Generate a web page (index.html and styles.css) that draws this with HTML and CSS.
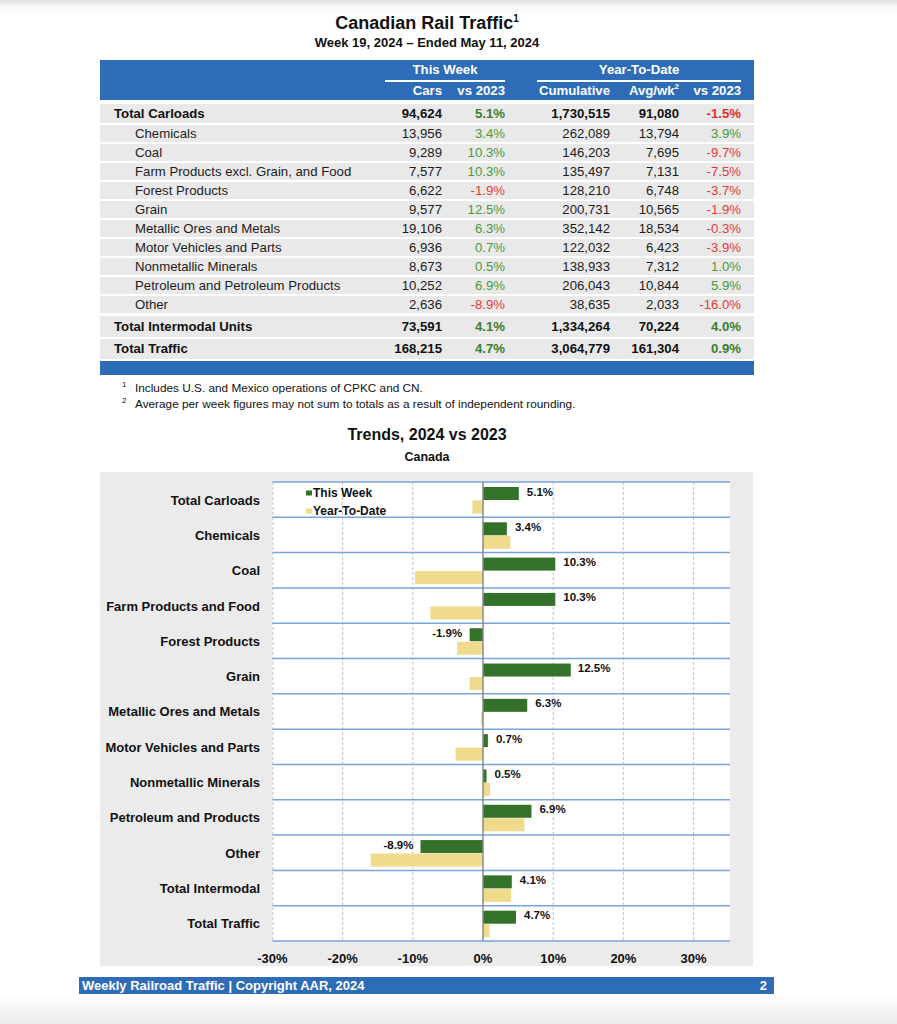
FILE: index.html
```html
<!DOCTYPE html>
<html>
<head>
<meta charset="utf-8">
<title>Canadian Rail Traffic</title>
<link rel="stylesheet" href="styles.css">
</head>
<body>
<div class="page">
  <h1 class="title">Canadian Rail Traffic<sup>1</sup></h1>
  <div class="subtitle">Week 19, 2024 – Ended May 11, 2024</div>

  <table class="traffic">
    <colgroup>
      <col class="c-label"><col class="c-cars"><col class="c-vs"><col class="c-gap"><col class="c-cum"><col class="c-avg"><col class="c-vs2"><col class="c-pad">
    </colgroup>
    <thead>
      <tr class="hrow1"><th></th><th colspan="2" class="grp">This Week</th><th></th><th colspan="3" class="grp">Year-To-Date</th><th></th></tr>
      <tr class="hrow2"><th></th><th>Cars</th><th>vs 2023</th><th></th><th>Cumulative</th><th>Avg/wk<sup>2</sup></th><th>vs 2023</th><th></th></tr>
    </thead>
    <tbody>
      <tr class="total first"><td class="lbl">Total Carloads</td><td>94,624</td><td class="up">5.1%</td><td></td><td>1,730,515</td><td>91,080</td><td class="down">-1.5%</td><td></td></tr>
      <tr class="sub"><td class="lbl">Chemicals</td><td>13,956</td><td class="up">3.4%</td><td></td><td>262,089</td><td>13,794</td><td class="up">3.9%</td><td></td></tr>
      <tr class="sub"><td class="lbl">Coal</td><td>9,289</td><td class="up">10.3%</td><td></td><td>146,203</td><td>7,695</td><td class="down">-9.7%</td><td></td></tr>
      <tr class="sub"><td class="lbl">Farm Products excl. Grain, and Food</td><td>7,577</td><td class="up">10.3%</td><td></td><td>135,497</td><td>7,131</td><td class="down">-7.5%</td><td></td></tr>
      <tr class="sub"><td class="lbl">Forest Products</td><td>6,622</td><td class="down">-1.9%</td><td></td><td>128,210</td><td>6,748</td><td class="down">-3.7%</td><td></td></tr>
      <tr class="sub"><td class="lbl">Grain</td><td>9,577</td><td class="up">12.5%</td><td></td><td>200,731</td><td>10,565</td><td class="down">-1.9%</td><td></td></tr>
      <tr class="sub"><td class="lbl">Metallic Ores and Metals</td><td>19,106</td><td class="up">6.3%</td><td></td><td>352,142</td><td>18,534</td><td class="down">-0.3%</td><td></td></tr>
      <tr class="sub"><td class="lbl">Motor Vehicles and Parts</td><td>6,936</td><td class="up">0.7%</td><td></td><td>122,032</td><td>6,423</td><td class="down">-3.9%</td><td></td></tr>
      <tr class="sub"><td class="lbl">Nonmetallic Minerals</td><td>8,673</td><td class="up">0.5%</td><td></td><td>138,933</td><td>7,312</td><td class="up">1.0%</td><td></td></tr>
      <tr class="sub"><td class="lbl">Petroleum and Petroleum Products</td><td>10,252</td><td class="up">6.9%</td><td></td><td>206,043</td><td>10,844</td><td class="up">5.9%</td><td></td></tr>
      <tr class="sub"><td class="lbl">Other</td><td>2,636</td><td class="down">-8.9%</td><td></td><td>38,635</td><td>2,033</td><td class="down">-16.0%</td><td></td></tr>
      <tr class="total inter"><td class="lbl">Total Intermodal Units</td><td>73,591</td><td class="up">4.1%</td><td></td><td>1,334,264</td><td>70,224</td><td class="up">4.0%</td><td></td></tr>
      <tr class="total traffic-row"><td class="lbl">Total Traffic</td><td>168,215</td><td class="up">4.7%</td><td></td><td>3,064,779</td><td>161,304</td><td class="up">0.9%</td><td></td></tr>
    </tbody>
    <tfoot>
      <tr><td colspan="8"></td></tr>
    </tfoot>
  </table>

  <div class="notes">
    <p><sup>1</sup>Includes U.S. and Mexico operations of CPKC and CN.</p>
    <p><sup>2</sup>Average per week figures may not sum to totals as a result of independent rounding.</p>
  </div>

  <h2 class="chart-title">Trends, 2024 vs 2023</h2>
  <div class="chart-sub">Canada</div>

  <div class="chart">
    <svg class="chart-svg" width="653" height="494" viewBox="0 0 653 494" xmlns="http://www.w3.org/2000/svg">
      <rect x="172.4" y="10" width="457.6" height="459" fill="#ffffff"/>
      <g class="grid" stroke="#c2c2c2" stroke-width="1" stroke-dasharray="3 2">
        <line x1="172.9" y1="10" x2="172.9" y2="469"/>
        <line x1="242.6" y1="10" x2="242.6" y2="469"/>
        <line x1="312.8" y1="10" x2="312.8" y2="469"/>
        <line x1="453.2" y1="10" x2="453.2" y2="469"/>
        <line x1="523.4" y1="10" x2="523.4" y2="469"/>
        <line x1="593.6" y1="10" x2="593.6" y2="469"/>
      </g>
      <g class="seps" stroke="#79a5dd" stroke-width="1.5">
        <line x1="172.4" y1="10" x2="630" y2="10"/>
        <line x1="172.4" y1="45.31" x2="630" y2="45.31"/>
        <line x1="172.4" y1="80.62" x2="630" y2="80.62"/>
        <line x1="172.4" y1="115.92" x2="630" y2="115.92"/>
        <line x1="172.4" y1="151.23" x2="630" y2="151.23"/>
        <line x1="172.4" y1="186.54" x2="630" y2="186.54"/>
        <line x1="172.4" y1="221.85" x2="630" y2="221.85"/>
        <line x1="172.4" y1="257.15" x2="630" y2="257.15"/>
        <line x1="172.4" y1="292.46" x2="630" y2="292.46"/>
        <line x1="172.4" y1="327.77" x2="630" y2="327.77"/>
        <line x1="172.4" y1="363.08" x2="630" y2="363.08"/>
        <line x1="172.4" y1="398.38" x2="630" y2="398.38"/>
        <line x1="172.4" y1="433.69" x2="630" y2="433.69"/>
        <line x1="172.4" y1="469" x2="630" y2="469"/>
      </g>
      <g class="bars-week" fill="#34712b">
        <rect x="383" y="15" width="35.8" height="13"/>
        <rect x="383" y="50.31" width="23.87" height="13"/>
        <rect x="383" y="85.62" width="72.31" height="13"/>
        <rect x="383" y="120.92" width="72.31" height="13"/>
        <rect x="369.66" y="156.23" width="13.34" height="13"/>
        <rect x="383" y="191.54" width="87.75" height="13"/>
        <rect x="383" y="226.85" width="44.23" height="13"/>
        <rect x="383" y="262.15" width="4.91" height="13"/>
        <rect x="383" y="297.46" width="3.51" height="13"/>
        <rect x="383" y="332.77" width="48.44" height="13"/>
        <rect x="320.52" y="368.08" width="62.48" height="13"/>
        <rect x="383" y="403.38" width="28.78" height="13"/>
        <rect x="383" y="438.69" width="32.99" height="13"/>
      </g>
      <g class="bars-ytd" fill="#f0da8b">
        <rect x="372.47" y="28.5" width="10.53" height="13"/>
        <rect x="383" y="63.81" width="27.38" height="13"/>
        <rect x="314.91" y="99.12" width="68.09" height="13"/>
        <rect x="330.35" y="134.42" width="52.65" height="13"/>
        <rect x="357.03" y="169.73" width="25.97" height="13"/>
        <rect x="369.66" y="205.04" width="13.34" height="13"/>
        <rect x="380.89" y="240.35" width="2.11" height="13"/>
        <rect x="355.62" y="275.65" width="27.38" height="13"/>
        <rect x="383" y="310.96" width="7.02" height="13"/>
        <rect x="383" y="346.27" width="41.42" height="13"/>
        <rect x="270.68" y="381.58" width="112.32" height="13"/>
        <rect x="383" y="416.88" width="28.08" height="13"/>
        <rect x="383" y="452.19" width="6.32" height="13"/>
      </g>
      <line x1="383" y1="10" x2="383" y2="469" stroke="#8a8a8a" stroke-width="1.5"/>
      <g class="legend">
        <rect x="206" y="18.5" width="6" height="5" fill="#34712b"/>
        <text x="213" y="25.3" class="lg">This Week</text>
        <rect x="206" y="36.5" width="6" height="5" fill="#f0da8b"/>
        <text x="213" y="43.3" class="lg">Year-To-Date</text>
      </g>
      <g class="vals">
        <text x="426.8" y="23.5">5.1%</text>
        <text x="414.9" y="58.8">3.4%</text>
        <text x="463.3" y="94.1">10.3%</text>
        <text x="463.3" y="129.4">10.3%</text>
        <text x="362.2" y="164.7" class="neg">-1.9%</text>
        <text x="477.8" y="200.0">12.5%</text>
        <text x="435.2" y="235.3">6.3%</text>
        <text x="395.9" y="270.6">0.7%</text>
        <text x="394.5" y="306.0">0.5%</text>
        <text x="439.4" y="341.3">6.9%</text>
        <text x="313.5" y="376.6" class="neg">-8.9%</text>
        <text x="419.8" y="411.9">4.1%</text>
        <text x="424.0" y="447.2">4.7%</text>
      </g>
      <g class="cats">
        <text x="160" y="32.6">Total Carloads</text>
        <text x="160" y="67.9">Chemicals</text>
        <text x="160" y="103.2">Coal</text>
        <text x="160" y="138.5">Farm Products and Food</text>
        <text x="160" y="173.8">Forest Products</text>
        <text x="160" y="209.1">Grain</text>
        <text x="160" y="244.4">Metallic Ores and Metals</text>
        <text x="160" y="279.8">Motor Vehicles and Parts</text>
        <text x="160" y="315.1">Nonmetallic Minerals</text>
        <text x="160" y="350.4">Petroleum and Products</text>
        <text x="160" y="385.7">Other</text>
        <text x="160" y="421.0">Total Intermodal</text>
        <text x="160" y="456.3">Total Traffic</text>
      </g>
      <g class="axis">
        <text x="172.4" y="490.6">-30%</text>
        <text x="242.6" y="490.6">-20%</text>
        <text x="312.8" y="490.6">-10%</text>
        <text x="383" y="490.6">0%</text>
        <text x="453.2" y="490.6">10%</text>
        <text x="523.4" y="490.6">20%</text>
        <text x="593.6" y="490.6">30%</text>
      </g>
    </svg>
  </div>

  <div class="footer">
    <span>Weekly Railroad Traffic | Copyright AAR, 2024</span>
    <span>2</span>
  </div>
</div>
</body>
</html>
```

FILE: styles.css
```css
html {
  height: 1024px;
  background: linear-gradient(to bottom, #e0e0e0 0px, #f6f6f6 6px, #ffffff 14px, #ffffff 994px, #ececec 1024px);
}

body {
  margin: 0;
  padding-top: 12px;
  font-family: "Liberation Sans", Arial, Helvetica, sans-serif;
  color: #111;
}

.page {
  width: 654px;
  margin-left: 100px;
}

.title {
  margin: 0;
  font-size: 18px;
  line-height: 22px;
  font-weight: bold;
  text-align: center;
}

.title sup {
  font-size: 10px;
  line-height: 0;
  vertical-align: 7px;
}

.subtitle {
  font-size: 13px;
  line-height: 18px;
  font-weight: bold;
  text-align: center;
}

.traffic {
  margin-top: 8px;
  width: 654px;
  table-layout: fixed;
  border-collapse: separate;
  border-spacing: 0;
  font-size: 13.2px;
}

.c-label { width: 285px; }
.c-cars { width: 57px; }
.c-vs { width: 63px; }
.c-gap { width: 32px; }
.c-cum { width: 73px; }
.c-avg { width: 69px; }
.c-vs2 { width: 62px; }
.c-pad { width: 13px; }

.traffic th {
  background: #2e6cb8;
  color: #fff;
  font-weight: bold;
  padding: 0;
  text-align: right;
  white-space: nowrap;
}

.hrow1 th {
  line-height: 20px;
  height: 22px;
  vertical-align: top;
  box-sizing: border-box;
}

.hrow1 th.grp {
  text-align: center;
  border-bottom: 2px solid #fff;
}

.hrow2 th {
  line-height: 18px;
  height: 18px;
}

.hrow2 sup {
  font-size: 8px;
  line-height: 0;
  vertical-align: 6px;
}

.traffic td {
  background: #e9e9e9;
  border-top: 2px solid #fff;
  padding: 0;
  text-align: right;
  white-space: nowrap;
  line-height: 17px;
  color: #1c1c1c;
}

.traffic td.lbl {
  text-align: left;
}

.sub td.lbl {
  padding-left: 35px;
}

.total td {
  font-weight: bold;
  color: #111;
}

.total td.lbl {
  padding-left: 14px;
}

.first td {
  border-top-width: 4px;
  line-height: 19px;
}

.inter td {
  border-top-width: 3px;
  line-height: 21px;
}

.traffic-row td {
  line-height: 20px;
}

.traffic td.up { color: #4a9a3b; }
.traffic td.down { color: #e63a3a; }
.total td.up { color: #3a7f2d; }
.total td.down { color: #e12f2f; }

.traffic tfoot td {
  background: #2e6cb8;
  border-top: 2px solid #fff;
  height: 14px;
  line-height: 14px;
  padding: 0;
}

.notes {
  margin-top: 5px;
  padding-left: 22px;
  font-size: 11.8px;
  line-height: 16px;
  color: #111;
}

.notes p {
  margin: 0;
}

.notes sup {
  display: inline-block;
  width: 13px;
  font-size: 8px;
  line-height: 0;
  vertical-align: 5px;
}

.chart-title {
  margin: 13px 0 0;
  font-size: 16px;
  line-height: 20px;
  font-weight: bold;
  text-align: center;
}

.chart-sub {
  margin-top: 4px;
  font-size: 12.5px;
  line-height: 16px;
  font-weight: bold;
  text-align: center;
}

.chart {
  margin-top: 7px;
  width: 653px;
  height: 494px;
  background: #ebebeb;
}

.chart-svg {
  display: block;
  font-family: "Liberation Sans", Arial, Helvetica, sans-serif;
  font-weight: bold;
}

.chart-svg .lg {
  font-size: 12px;
  fill: #111;
}

.chart-svg .vals text {
  font-size: 11.5px;
  fill: #111;
}

.chart-svg .vals text.neg {
  text-anchor: end;
}

.chart-svg .cats text {
  font-size: 13px;
  fill: #111;
  text-anchor: end;
}

.chart-svg .axis text {
  font-size: 13px;
  fill: #111;
  text-anchor: middle;
}

.footer {
  margin-top: 11px;
  margin-left: -21px;
  width: 695px;
  box-sizing: border-box;
  padding: 0 7px 0 3px;
  display: flex;
  justify-content: space-between;
  background: #2e6cb8;
  color: #fff;
  font-size: 13px;
  line-height: 17px;
  font-weight: bold;
}
```
